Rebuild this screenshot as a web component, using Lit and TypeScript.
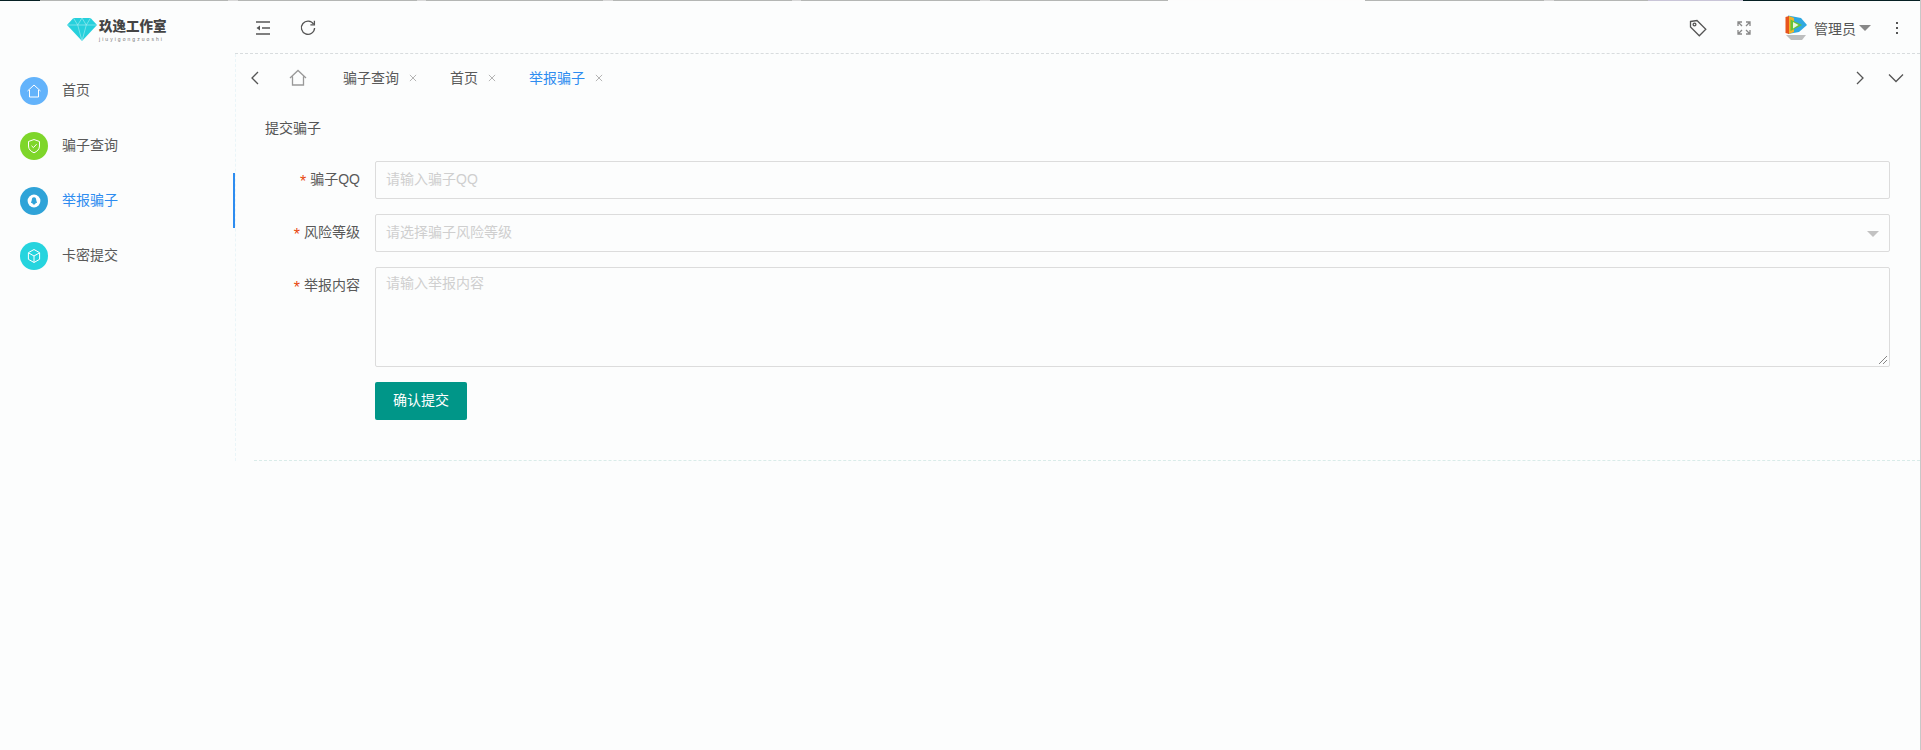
import { LitElement, html, css, svg } from "lit";
import { customElement } from "lit/decorators.js";

const menu = [
  { t: "首页", c: "#63b3fb", i: svg`<path d="M2.5 9 L9 3 L15.5 9 M4.5 8 V15 H13.5 V8" />` },
  { t: "骗子查询", c: "#7ed62a", i: svg`<path d="M9 2.5 L14.5 4.5 V9 C14.5 12.5 12 14.5 9 15.8 C6 14.5 3.5 12.5 3.5 9 V4.5 Z M6.5 8.8 L8.4 10.6 L11.6 7.2" />` },
  { t: "举报骗子", c: "#2fa3d8", active: true, i: svg`<circle cx="9" cy="9" r="6.4" fill="#fff" stroke="none"/><path d="M9 5.2 C7.4 5.2 6.8 6.6 6.8 8 L6 10.8 C6.6 11.4 7 11 7.2 10.8 C7.4 12 8 12.6 9 12.6 C10 12.6 10.6 12 10.8 10.8 C11 11 11.4 11.4 12 10.8 L11.2 8 C11.2 6.6 10.6 5.2 9 5.2 Z" fill="#2fa3d8" stroke="none"/>` },
  { t: "卡密提交", c: "#26d4de", i: svg`<path d="M9 2.5 L14.6 5.7 V12.3 L9 15.5 L3.4 12.3 V5.7 Z M3.6 5.9 L9 9 L14.4 5.9 M9 9 V15.3" />` },
];

const tabs = [
  { t: "骗子查询" },
  { t: "首页" },
  { t: "举报骗子", active: true },
];

@customElement("app-root")
export class AppRoot extends LitElement {
  static styles = css`
    :host {
      display: block;
      width: 1921px;
      height: 750px;
      overflow: hidden;
      background: #fcfdfd;
      font-family: "Liberation Sans", "Noto Sans CJK SC", sans-serif;
      font-size: 14px;
      color: #555;
    }
    .topline {
      height: 1px;
      background: linear-gradient(
        90deg,
        #062024 0 40px,
        #b4b6b4 40px 228px,
        #d8d8d8 228px 238px,
        #b4b6b4 238px 417px,
        #d8d8d8 417px 426px,
        #b4b6b4 426px 603px,
        #d8d8d8 603px 613px,
        #b4b6b4 613px 792px,
        #d8d8d8 792px 801px,
        #b4b6b4 801px 980px,
        #d8d8d8 980px 990px,
        #b4b6b4 990px 1168px,
        #fcfcfc 1168px 1365px,
        #b4b6b4 1365px 1544px,
        #d8d8d8 1544px 1554px,
        #b4b6b4 1554px 1648px,
        #c9c5d8 1648px 1743px,
        #062024 1743px 1920px,
        #c8c8c8 1920px
      );
    }
    .shell {
      display: flex;
      height: 749px;
    }
    .side {
      width: 235px;
      flex: none;
      display: flex;
      flex-direction: column;
    }
    .logo {
      height: 52px;
      display: flex;
      align-items: flex-start;
      padding: 16px 0 0 67px;
      box-sizing: border-box;
      gap: 2px;
    }
    .logo-text {
      display: flex;
      flex-direction: column;
    }
    .logo-name {
      font-size: 13.5px;
      line-height: 16px;
      font-weight: 900;
      color: #444;
      margin-top: 2px;
    }
    .logo-sub {
      font-size: 5px;
      line-height: 6px;
      letter-spacing: 2.05px;
      color: #777;
      margin-top: 1px;
    }
    .menu {
      margin-top: 10px;
      display: flex;
      flex-direction: column;
    }
    .item {
      height: 55px;
      display: flex;
      align-items: center;
      padding-left: 20px;
      gap: 14px;
      color: #595959;
      font-size: 14px;
      box-sizing: border-box;
    }
    .item span {
      padding-bottom: 3px;
    }
    .item.active {
      color: #2d8cf0;
      border-right: 2px solid #2d8cf0;
    }
    .dot {
      width: 28px;
      height: 28px;
      border-radius: 50%;
      display: flex;
      align-items: center;
      justify-content: center;
    }
    .dot svg {
      width: 18px;
      height: 18px;
      fill: none;
      stroke: #fff;
      stroke-width: 1;
      stroke-linejoin: round;
    }
    .main {
      flex: 1;
      display: flex;
      flex-direction: column;
      min-width: 0;
      border-right: 1px solid #c8c8c8;
    }
    .head {
      height: 53px;
      box-sizing: border-box;
      border-bottom: 1px dashed #d8dcde;
      display: flex;
      align-items: center;
      padding: 2px 0 0 19px;
    }
    .ico {
      fill: none;
      stroke: #555;
      stroke-width: 1.3;
      display: block;
      flex: none;
    }
    .refresh {
      margin-left: 27px;
    }
    .spacer {
      flex: 1;
    }
    .tag-ico {
      margin-right: 30px;
    }
    .full-ico {
      margin-right: 34px;
      stroke: #888;
    }
    .tv {
      margin-right: 7px;
      flex: none;
    }
    .user {
      color: #555;
      font-size: 14px;
    }
    .caret {
      width: 0;
      height: 0;
      border: 6px solid transparent;
      border-top: 6px solid #888;
      border-bottom: 0;
      margin-left: 3px;
    }
    .more {
      margin: 0 22px 0 25px;
      display: flex;
      flex-direction: column;
      gap: 3px;
    }
    .more i {
      width: 2px;
      height: 2px;
      background: #555;
      display: block;
    }
    .body {
      height: 407px;
      border-left: 1px dashed #eaf5f8;
      display: flex;
      flex-direction: column;
    }
    .tabs {
      height: 47px;
      flex: none;
      display: flex;
      align-items: center;
      padding-left: 14px;
      box-sizing: border-box;
    }
    .home {
      margin-left: 27px;
      margin-right: 36px;
      stroke: #999;
    }
    .tab {
      display: flex;
      align-items: center;
      gap: 10px;
      margin-right: 33px;
      color: #595959;
    }
    .tab span {
      padding-bottom: 2px;
    }
    .tab.active {
      color: #2d8cf0;
    }
    .x {
      stroke: #aaa;
      stroke-width: 1;
      fill: none;
      display: block;
    }
    .tab-right {
      display: flex;
      align-items: center;
      gap: 23px;
      margin-left: auto;
      padding-right: 16px;
    }
    .card {
      height: 360px;
      box-sizing: border-box;
      margin-left: 18px;
      border-bottom: 1px dashed #d9ece9;
      padding: 15px 30px 0 11px;
    }
    .title {
      line-height: 24px;
      color: #555;
      margin-bottom: 21px;
    }
    .row {
      display: flex;
      margin-bottom: 15px;
    }
    .label {
      width: 95px;
      flex: none;
      text-align: right;
      line-height: 36px;
      color: #595959;
      padding-right: 15px;
    }
    .req {
      display: inline-block;
      color: #e8490f;
      margin-right: 4px;
      font-size: 16px;
      line-height: 1;
      vertical-align: -3px;
    }
    .field {
      flex: 1;
      height: 38px;
      box-sizing: border-box;
      border: 1px solid #dcdcdc;
      border-radius: 2px;
      line-height: 34px;
      padding-left: 10px;
      color: #cfcfcf;
      position: relative;
    }
    .field.area {
      height: 100px;
      line-height: 30px;
    }
    .arrow {
      position: absolute;
      right: 10px;
      top: 16px;
      width: 0;
      height: 0;
      border: 6px solid transparent;
      border-top: 6px solid #c2c2c2;
      border-bottom: 0;
    }
    .grip {
      position: absolute;
      right: 1px;
      bottom: 1px;
    }
    .btn {
      margin-left: 110px;
      width: 92px;
      height: 38px;
      background: #009688;
      color: #fff;
      border-radius: 2px;
      text-align: center;
      line-height: 36px;
    }
  `;

  render() {
    return html`
      <div class="topline"></div>
      <div class="shell">
        <aside class="side">
          <div class="logo">
            <svg width="30" height="24" viewBox="0 0 28 24" preserveAspectRatio="none">
              <path d="M6 1 H22 L28 8 L14 24 L0 8 Z" fill="#26d0dc" />
              <path d="M0 8 H28 M6 1 L10 8 L14 24 L18 8 L22 1 M10 8 L14 1 L18 8" fill="none" stroke="#a8eef2" stroke-width="0.6" />
            </svg>
            <div class="logo-text">
              <div class="logo-name">玖逸工作室</div>
              <div class="logo-sub">jiuyigongzuoshi</div>
            </div>
          </div>
          <nav class="menu">
            ${menu.map(
              (m) => html`
                <div class="item ${m.active ? "active" : ""}">
                  <div class="dot" style="background:${m.c}">
                    <svg viewBox="0 0 18 18">${m.i}</svg>
                  </div>
                  <span>${m.t}</span>
                </div>
              `
            )}
          </nav>
        </aside>
        <div class="main">
          <header class="head">
            <svg class="ico" width="18" height="18" viewBox="0 0 18 18">
              <path d="M2 3 H16 M8 9 H16 M2 15 H16" />
              <path d="M6 6.5 L2.5 9 L6 11.5 Z" fill="#555" stroke="none" />
            </svg>
            <svg class="ico refresh" width="18" height="18" viewBox="0 0 18 18" stroke-width="1.7">
              <path d="M14.6 5.2 A6.6 6.6 0 1 0 15.6 9" />
              <path d="M15.4 1.8 V5.8 H11.4" />
            </svg>
            <div class="spacer"></div>
            <svg class="ico tag-ico" width="18" height="18" viewBox="0 0 18 18" stroke-width="1">
              <path d="M1.5 2.5 L8 1.5 L16.8 10.3 L10.3 16.8 L1.5 8 Z" />
              <circle cx="5.5" cy="5.5" r="1.4" />
            </svg>
            <svg class="ico full-ico" width="14" height="14" viewBox="0 0 14 14" stroke-width="1">
              <path d="M1 5 V1 H5 M1 1 L5 5 M9 1 H13 V5 M13 1 L9 5 M1 9 V13 H5 M1 13 L5 9 M13 9 V13 H9 M13 13 L9 9" />
            </svg>
            <svg class="tv" width="22" height="26" viewBox="0 0 22 26">
              <path d="M3 0.5 L16 3 L22 10 L14 17 L3 19 Z" fill="#2fa8e0" />
              <path d="M0.5 2 L4 1 L4 19 L0.5 18 Z" fill="#e8541c" />
              <path d="M4 1 L9 3 L9 17 L4 19 Z" fill="#f0b428" />
              <path d="M5.5 4.5 L17 10 L5.5 16 Z" fill="#64c23a" />
              <path d="M8 7 L13.5 10 L8 13.5 Z" fill="#e8f5e0" />
              <path d="M1 20 H21 L17 25 H6 Z" fill="#a8a8a8" opacity="0.75" />
            </svg>
            <span class="user">管理员</span>
            <span class="caret"></span>
            <div class="more"><i></i><i></i><i></i></div>
          </header>
          <div class="body">
            <div class="tabs">
              <svg class="ico" width="12" height="14" viewBox="0 0 12 14"><path d="M8 1 L2 7 L8 13" /></svg>
              <svg class="ico home" width="18" height="18" viewBox="0 0 18 18" stroke-width="1">
                <path d="M1 9 L9 1.5 L17 9 M3.5 7.5 V16 H14.5 V7.5" />
              </svg>
              ${tabs.map(
                (t) => html`
                  <div class="tab ${t.active ? "active" : ""}">
                    <span>${t.t}</span>
                    <svg class="x" width="8" height="8" viewBox="0 0 9 9"><path d="M1 1 L8 8 M8 1 L1 8" /></svg>
                  </div>
                `
              )}
              <div class="tab-right">
                <svg class="ico" width="12" height="14" viewBox="0 0 12 14"><path d="M4 1 L10 7 L4 13" /></svg>
                <svg class="ico" width="16" height="10" viewBox="0 0 16 10"><path d="M1 1.5 L8 8.5 L15 1.5" /></svg>
              </div>
            </div>
            <section class="card">
              <div class="title">提交骗子</div>
              <div class="row">
                <div class="label"><span class="req">*</span>骗子QQ</div>
                <div class="field">请输入骗子QQ</div>
              </div>
              <div class="row">
                <div class="label"><span class="req">*</span>风险等级</div>
                <div class="field">请选择骗子风险等级<span class="arrow"></span></div>
              </div>
              <div class="row">
                <div class="label"><span class="req">*</span>举报内容</div>
                <div class="field area">
                  请输入举报内容
                  <svg class="grip" width="10" height="10" viewBox="0 0 10 10" fill="none" stroke="#666" stroke-width="0.8">
                    <path d="M1 9 L9 1 M5 9 L9 5" />
                  </svg>
                </div>
              </div>
              <div class="btn">确认提交</div>
            </section>
          </div>
        </div>
      </div>
    `;
  }
}
